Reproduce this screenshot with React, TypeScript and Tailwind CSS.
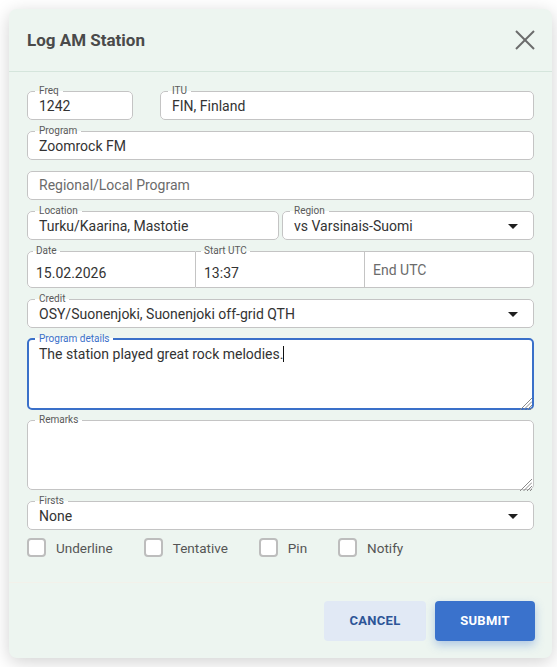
import React from "react";

const font = { fontFamily: "Roboto, 'Noto Sans', Arial, sans-serif" };

function Caret() {
  return (
    <svg width="10" height="5" viewBox="0 0 10 5" className="shrink-0">
      <path d="M0 0 L10 0 L5 5 Z" fill="#1f1f1f" />
    </svg>
  );
}

function Legend({ label, blue }: { label?: string; blue?: boolean }) {
  if (!label)
    return <legend className="w-0 p-0 text-[10px] leading-[12px]">&#8203;</legend>;
  return (
    <legend
      className={`-ml-[4px] px-[4px] text-[10px] leading-[12px] ${
        blue ? "text-[#3a70c9]" : "text-[#5a5a5a]"
      }`}
    >
      {label}
    </legend>
  );
}

function Field({
  label,
  value,
  placeholder,
  select,
  className = "",
}: {
  label?: string;
  value?: string;
  placeholder?: string;
  select?: boolean;
  className?: string;
}) {
  return (
    <fieldset
      className={`min-w-0 border border-[#c4c4c4] rounded-[5px] bg-white pl-[11px] pr-[15px] ${
        label ? "pb-[4px]" : "pb-[5px]"
      } ${className}`}
    >
      <Legend label={label} />
      <div className={`flex items-center justify-between h-[18px] ${label ? "" : "-mt-[1px]"}`}>
        {value ? (
          <span className="text-[14px] leading-[18px] text-[#333]">{value}</span>
        ) : (
          <span className="text-[14px] leading-[18px] text-[#6b6b6b]">{placeholder}</span>
        )}
        {select && <Caret />}
      </div>
    </fieldset>
  );
}

function Resize() {
  return (
    <svg width="13" height="13" viewBox="0 0 13 13" className="self-end -mr-[10px] -mb-[3px]">
      <line x1="1" y1="13" x2="13" y2="1" stroke="#8a8a8a" strokeWidth="1" />
      <line x1="4.5" y1="13" x2="13" y2="4.5" stroke="#8a8a8a" strokeWidth="1" />
      <line x1="8" y1="13" x2="13" y2="8" stroke="#8a8a8a" strokeWidth="1" />
      <line x1="11" y1="13" x2="13" y2="11" stroke="#8a8a8a" strokeWidth="1" />
    </svg>
  );
}

function DateSeg({
  label,
  value,
  placeholder,
  className = "",
}: {
  label?: string;
  value?: string;
  placeholder?: string;
  className?: string;
}) {
  return (
    <fieldset className={`min-w-0 border-[#c4c4c4] bg-white px-[8px] pb-[8px] ${className}`}>
      {label ? (
        <legend className="-ml-[3px] px-[3px] text-[10px] leading-[12px] text-[#5a5a5a]">{label}</legend>
      ) : (
        <legend className="w-0 p-0 text-[10px] leading-[12px]">&#8203;</legend>
      )}
      <div className={`h-[18px] ${label ? "mt-[4px]" : "mt-[1px]"}`}>
        {value ? (
          <span className="text-[14px] leading-[18px] text-[#333]">{value}</span>
        ) : (
          <span className="text-[14px] leading-[18px] text-[#6b6b6b]">{placeholder}</span>
        )}
      </div>
    </fieldset>
  );
}

function Check({ label }: { label: string }) {
  return (
    <div className="flex items-center gap-[10px]">
      <div className="w-[19px] h-[19px] rounded-[4px] border-2 border-[#bdbdbd] bg-white" />
      <span className="text-[13.5px] leading-[18px] text-[#555]">{label}</span>
    </div>
  );
}

export default function App() {
  return (
    <div className="min-h-screen bg-white pt-[9px] pl-[9px]" style={font}>
      <div className="w-[543px] rounded-[8px] bg-[#edf5f0] shadow-[0_4px_18px_rgba(0,0,0,0.18)]">
        <div className="flex items-center justify-between h-[63px] pl-[18px] pr-[17px] border-b border-[#d5e5dc]">
          <h2 className="text-[17px] font-bold text-[#4a4a4a] pt-[1px]">Log AM Station</h2>
          <svg width="20" height="20" viewBox="0 0 20 20">
            <line x1="1" y1="1" x2="19" y2="19" stroke="#6b6b6b" strokeWidth="2" />
            <line x1="19" y1="1" x2="1" y2="19" stroke="#6b6b6b" strokeWidth="2" />
          </svg>
        </div>

        <div className="flex flex-col gap-[5px] px-[18px] pt-[13px] pb-[25px]">
          <div className="flex gap-[27px]">
            <Field label="Freq" value="1242" className="w-[106px]" />
            <Field label="ITU" value="FIN, Finland" className="flex-1" />
          </div>
          <Field label="Program" value="Zoomrock FM" />
          <Field placeholder="Regional/Local Program" />
          <div className="flex gap-[3px]">
            <Field label="Location" value="Turku/Kaarina, Mastotie" className="flex-1" />
            <Field label="Region" value="vs Varsinais-Suomi" select className="flex-1" />
          </div>
          <div className="grid grid-cols-3">
            <DateSeg label="Date" value="15.02.2026" className="border rounded-l-[5px]" />
            <DateSeg label="Start UTC" value="13:37" className="border-y border-r" />
            <DateSeg placeholder="End UTC" className="border-y border-r rounded-r-[5px]" />
          </div>
          <Field label="Credit" value="OSY/Suonenjoki, Suonenjoki off-grid QTH" select />

          <fieldset className="min-w-0 border-2 border-[#3a70c9] rounded-[5px] bg-white pl-[10px] pr-[10px] pb-[1px]">
            <Legend label="Program details" blue />
            <div className="flex flex-col h-[62px]">
              <div className="flex-1 text-[14px] leading-[18px] text-[#333]">
                The station played great rock melodies.
                <span className="inline-block w-px h-[16px] bg-[#111] align-[-3px]" />
              </div>
              <Resize />
            </div>
          </fieldset>

          <fieldset className="-mt-[1px] min-w-0 border border-[#c4c4c4] rounded-[5px] bg-white pl-[11px] pr-[11px] pb-[1px]">
            <Legend label="Remarks" />
            <div className="flex flex-col h-[62px]">
              <div className="flex-1" />
              <Resize />
            </div>
          </fieldset>

          <Field label="Firsts" value="None" select />

          <div className="flex items-center gap-[31px] mt-[3px]">
            <Check label="Underline" />
            <Check label="Tentative" />
            <Check label="Pin" />
            <Check label="Notify" />
          </div>
        </div>

        <div className="flex justify-end gap-[9px] border-t border-[#f3f1ea] pt-[18px] pb-[17px] pr-[17px]">
          <button className="w-[102px] h-[40px] rounded-[4px] bg-[#e1e9f5] text-[13px] font-bold text-[#2d5597] tracking-[0.3px]">
            CANCEL
          </button>
          <button className="w-[100px] h-[40px] rounded-[4px] bg-[#3a72cc] text-[13px] font-bold text-white tracking-[0.3px] shadow-[0_4px_10px_rgba(58,114,204,0.35)]">
            SUBMIT
          </button>
        </div>
      </div>
    </div>
  );
}
